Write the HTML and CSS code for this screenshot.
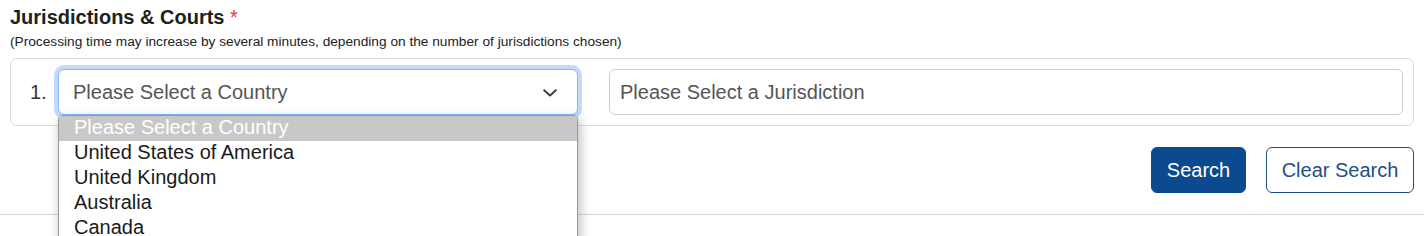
FILE: index.html
```html
<!DOCTYPE html>
<html lang="en">
<head>
<meta charset="utf-8">
<title>Jurisdictions &amp; Courts</title>
<link rel="stylesheet" href="styles.css">
</head>
<body>
<div class="page">
  <h2 class="title">Jurisdictions &amp; Courts <span class="req">*</span></h2>
  <p class="note">(Processing time may increase by several minutes, depending on the number of jurisdictions chosen)</p>
  <div class="row-box">
    <span class="num">1.</span>
    <div class="select-wrap">
      <div class="select">
        <span class="select-text">Please Select a Country</span>
        <svg class="chev" width="14" height="8" viewBox="0 0 14 8"><path d="M1.2 1.2 L7 6.6 L12.8 1.2" fill="none" stroke="#343a40" stroke-width="1.9" stroke-linecap="round" stroke-linejoin="round"/></svg>
      </div>
      <ul class="dropdown">
        <li class="opt active">Please Select a Country</li>
        <li class="opt">United States of America</li>
        <li class="opt">United Kingdom</li>
        <li class="opt">Australia</li>
        <li class="opt">Canada</li>
      </ul>
    </div>
    <div class="input">Please Select a Jurisdiction</div>
  </div>
  <div class="actions">
    <button class="btn btn-primary">Search</button>
    <button class="btn btn-outline">Clear Search</button>
  </div>
</div>
<hr class="divider">
</body>
</html>
```
FILE: styles.css
```css
html, body {
  margin: 0;
  padding: 0;
  background: #fff;
  font-family: "Liberation Sans", Arial, sans-serif;
  color: #222;
}
body {
  height: 236px;
  overflow: hidden;
}
.page {
  padding: 5px 10px 0 10px;
}
.title {
  margin: 0;
  font-size: 20px;
  line-height: 24px;
  font-weight: bold;
  color: #212121;
}
.req {
  color: #dc3545;
  font-weight: normal;
}
.note {
  margin: 4px 0 0 0;
  font-size: 13.7px;
  line-height: 17px;
  color: #222;
}
.row-box {
  margin-top: 8px;
  border: 1px solid #dcdcdc;
  border-radius: 7px;
  padding: 10px 10px 10px 19px;
  display: flex;
  align-items: center;
}
.num {
  font-size: 20px;
  line-height: 24px;
  color: #333;
  width: 28px;
  flex: none;
}
.select-wrap {
  position: relative;
  width: 520px;
  flex: none;
}
.select {
  box-sizing: border-box;
  height: 46px;
  border: 1px solid #86b7fe;
  border-radius: 6px;
  box-shadow: 0 0 0 4px #c3dafd;
  padding: 0 20px 0 14px;
  display: flex;
  align-items: center;
  justify-content: space-between;
  background: #fff;
}
.select-text {
  font-size: 20px;
  line-height: 24px;
  color: #555;
}
.chev {
  display: block;
  margin-top: 1px;
}
.dropdown {
  position: absolute;
  left: 0;
  top: 46px;
  width: 520px;
  box-sizing: border-box;
  margin: 0;
  padding: 0;
  list-style: none;
  background: #fff;
  border: 1px solid #9a9a9a;
  border-radius: 4px 4px 0 0;
  box-shadow: 2px 4px 12px rgba(0, 0, 0, 0.28);
  z-index: 5;
}
.opt {
  font-size: 20px;
  line-height: 22px;
  height: 22px;
  padding: 0 0 3px 15px;
  color: #1a1a1a;
}
.opt.active {
  background: #c8c8c8;
  color: #fff;
}
.input {
  box-sizing: border-box;
  margin-left: 31px;
  flex: 1;
  height: 46px;
  border: 1px solid #cfcfcf;
  border-radius: 6px;
  padding: 0 10px 0 10px;
  display: flex;
  align-items: center;
  font-size: 20px;
  line-height: 24px;
  color: #555;
}
.actions {
  margin-top: 21px;
  display: flex;
  justify-content: flex-end;
  gap: 20px;
}
.btn {
  box-sizing: border-box;
  height: 46px;
  border-radius: 6px;
  font-family: "Liberation Sans", Arial, sans-serif;
  font-size: 20px;
  line-height: 24px;
  padding: 0;
  white-space: nowrap;
  cursor: pointer;
}
.btn-primary {
  width: 95px;
  background: #0b4a8e;
  border: 1px solid #0b4a8e;
  color: #fff;
}
.btn-outline {
  width: 148px;
  background: #fff;
  border: 1px solid #1c4c88;
  color: #234f86;
}
.divider {
  margin: 21px 0 0 0;
  border: 0;
  border-top: 1px solid #d6d6d6;
  height: 0;
}
```
